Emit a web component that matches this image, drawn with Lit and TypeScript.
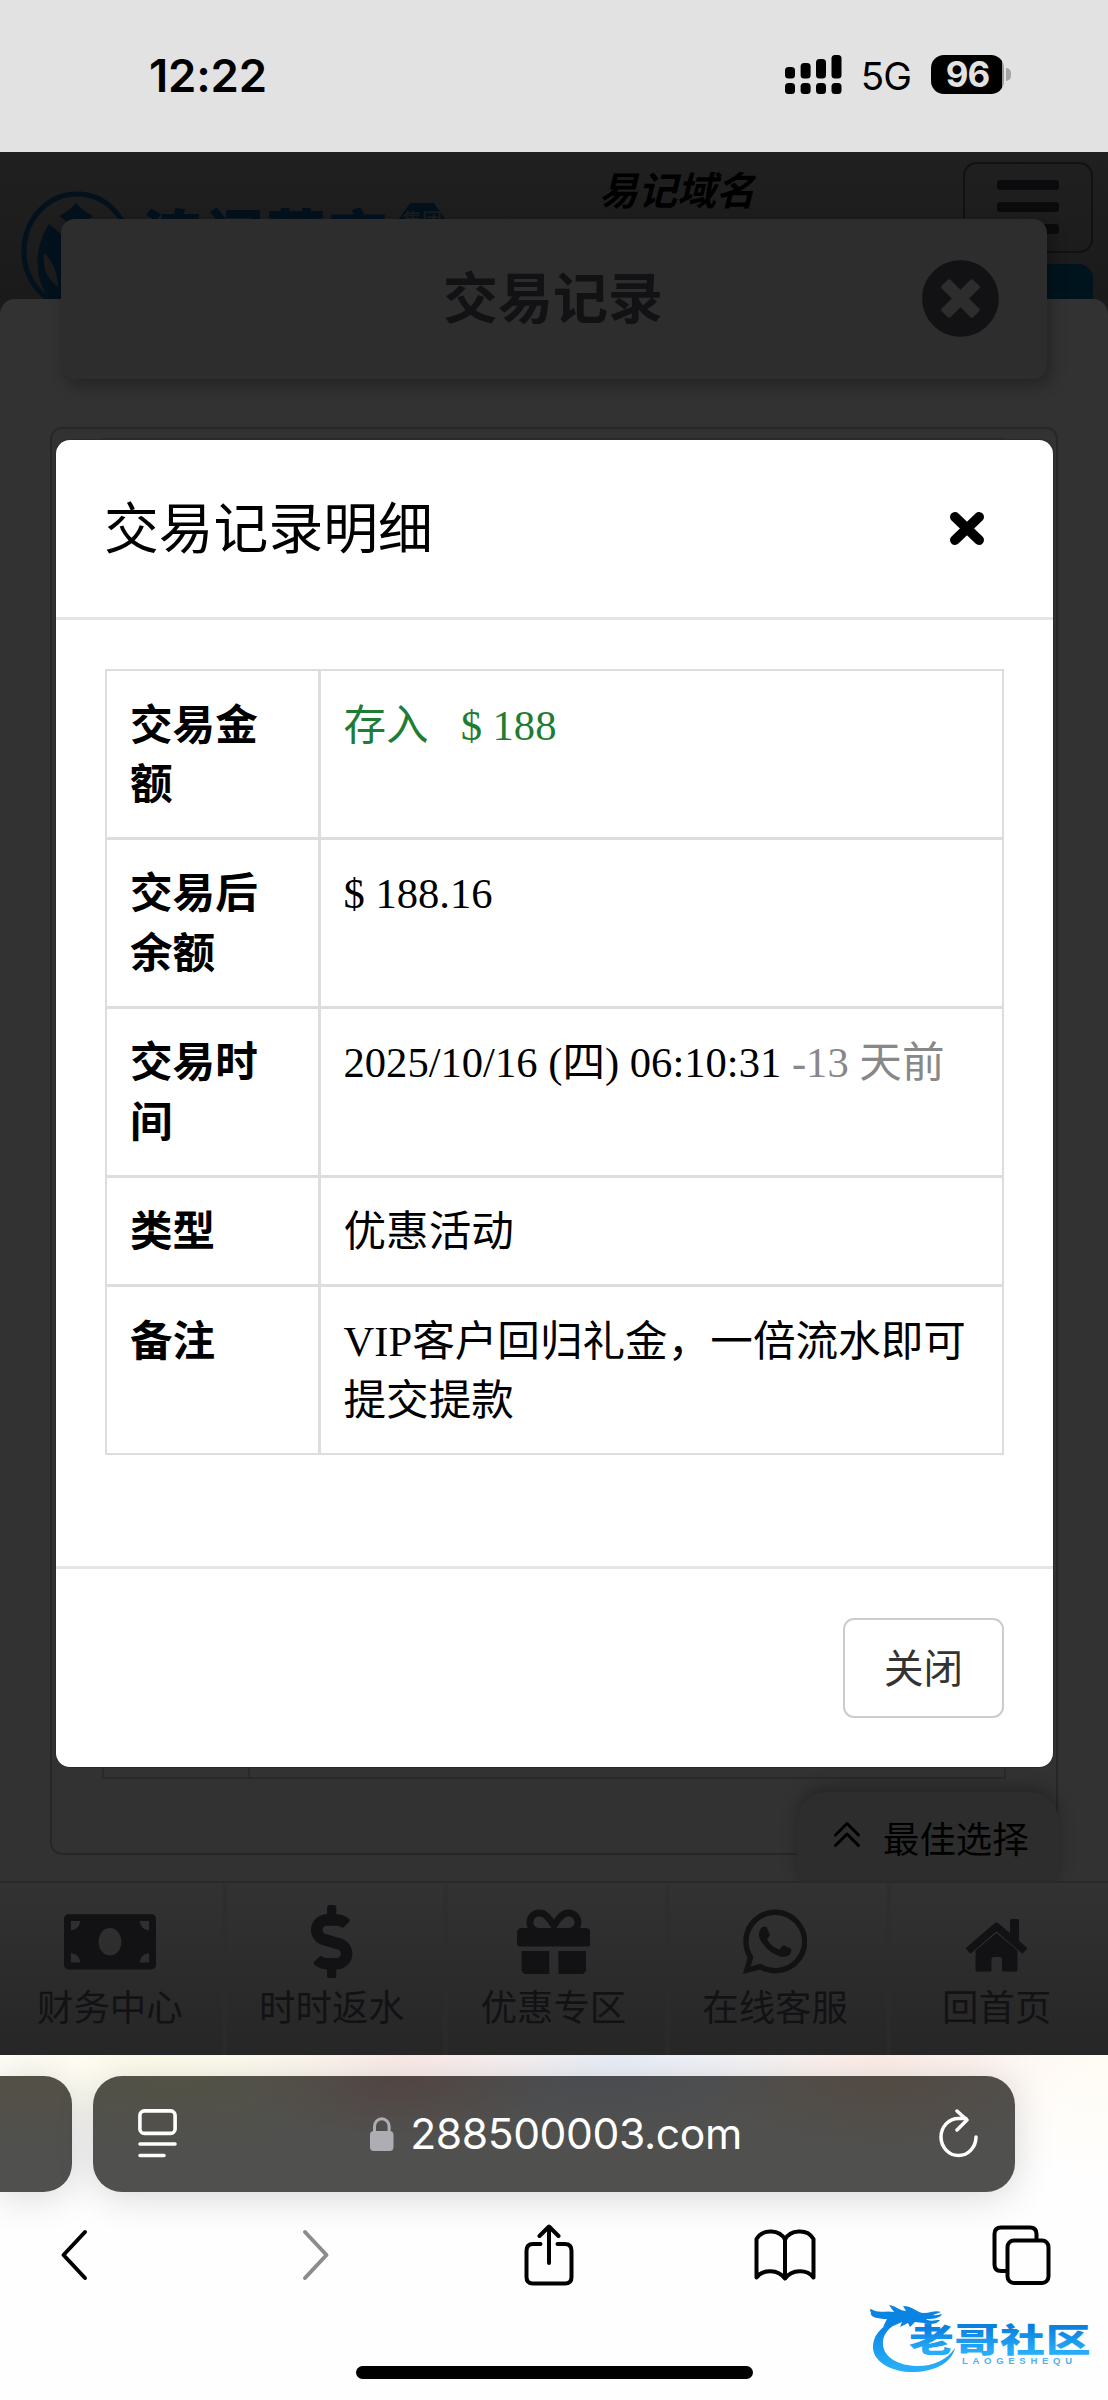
import { LitElement, html, css, svg } from 'lit';
import { customElement } from 'lit/decorators.js';

const money = svg`<path d="M608 64H32C14.33 64 0 78.33 0 96v320c0 17.67 14.33 32 32 32h576c17.67 0 32-14.33 32-32V96c0-17.67-14.33-32-32-32zM48 400v-64c35.35 0 64 28.65 64 64H48zm0-224v-64h64c0 35.35-28.65 64-64 64zm272 176c-44.19 0-80-42.99-80-96 0-53.02 35.82-96 80-96s80 42.98 80 96c0 53.03-35.83 96-80 96zm272 48h-64c0-35.35 28.65-64 64-64v64zm0-224c-35.35 0-64-28.65-64-64h64v64z"/>`;
const dollar = svg`<path d="M209.2 233.4l-108-31.6C88.7 198.2 80 186.5 80 173.5c0-16.3 13.2-29.5 29.5-29.5h66.3c12.2 0 24.2 3.7 34.2 10.5 6.1 4.1 14.3 3.1 19.5-2l34.8-34c7.1-6.9 6.1-18.4-1.8-24.5C238 74.8 207.4 64.1 176 64V16c0-8.8-7.2-16-16-16h-32c-8.8 0-16 7.2-16 16v48h-2.5C45.8 64-5.4 118.7.5 183.6c4.2 46.1 39.4 83.6 83.8 96.6l102.5 30c12.5 3.7 21.2 15.3 21.2 28.3 0 16.3-13.2 29.5-29.5 29.5h-66.3C100 368 88 364.3 78 357.5c-6.1-4.1-14.3-3.1-19.5 2l-34.8 34c-7.1 6.9-6.1 18.4 1.8 24.5 24.5 19.2 55.1 29.9 86.5 30v48c0 8.8 7.2 16 16 16h32c8.8 0 16-7.2 16-16v-48.2c46.6-.9 90.3-28.6 105.7-72.7 21.5-61.6-14.6-124.8-72.5-141.7z"/>`;
const gift = svg`<path d="M32 448c0 17.7 14.3 32 32 32h160V320H32v128zm256 32h160c17.7 0 32-14.3 32-32V320H288v160zm192-320h-42.1c6.2-12.1 10.1-25.5 10.1-40 0-48.5-39.5-88-88-88-41.6 0-68.5 21.3-103 68.3-34.5-47-61.4-68.3-103-68.3-48.5 0-88 39.5-88 88 0 14.5 3.8 27.9 10.1 40H32c-17.7 0-32 14.3-32 32v80c0 8.8 7.2 16 16 16h480c8.8 0 16-7.2 16-16v-80c0-17.7-14.3-32-32-32zm-326.1 0c-22.1 0-40-17.9-40-40s17.9-40 40-40c19.9 0 34.6 3.3 86.1 80h-86.1zm206.1 0h-86.1c51.4-76.5 65.7-80 86.1-80 22.1 0 40 17.9 40 40s-17.9 40-40 40z"/>`;
const whatsapp = svg`<path d="M380.9 97.1C339 55.1 283.2 32 223.9 32c-122.4 0-222 99.6-222 222 0 39.1 10.2 77.3 29.6 111L0 480l117.7-30.9c32.4 17.7 68.9 27 106.1 27h.1c122.3 0 224.1-99.6 224.1-222 0-59.3-25.2-115-67.1-157zm-157 341.6c-33.2 0-65.7-8.9-94-25.7l-6.7-4-69.8 18.3L72 359.2l-4.4-7c-18.5-29.4-28.2-63.3-28.2-98.2 0-101.7 82.8-184.5 184.6-184.5 49.3 0 95.6 19.2 130.4 54.1 34.8 34.9 56.2 81.2 56.1 130.5 0 101.8-84.9 184.6-186.6 184.6zm101.2-138.2c-5.5-2.8-32.8-16.2-37.9-18-5.1-1.9-8.8-2.8-12.5 2.8-3.7 5.6-14.3 18-17.6 21.8-3.2 3.7-6.5 4.2-12 1.4-32.6-16.3-54-29.1-75.5-66-5.7-9.8 5.7-9.1 16.3-30.3 1.8-3.7.9-6.9-.5-9.7-1.4-2.8-12.5-30.1-17.1-41.2-4.5-10.8-9.1-9.3-12.5-9.5-3.2-.2-6.9-.2-10.6-.2-3.7 0-9.7 1.4-14.8 6.9-5.1 5.6-19.4 19-19.4 46.3 0 27.3 19.9 53.7 22.6 57.4 2.8 3.7 39.1 59.7 94.8 83.8 35.2 15.2 49 16.5 66.6 13.9 10.7-1.6 32.8-13.4 37.4-26.4 4.6-13 4.6-24.1 3.2-26.4-1.3-2.5-5-3.9-10.5-6.6z"/>`;
const home = svg`<path d="M3 32 31.500 7.500 60 32" fill="none" stroke="currentColor" stroke-width="7.500" stroke-linejoin="round"/><path d="M45 1.500q0-1.500 1.500-1.500h6q1.500 0 1.500 1.500v21l-9-8z"/><path d="M31.500 14 52.500 31.500v19.500q0 1.500-1.500 1.500H38.500q-1.500 0-1.500-1.500V40.500q0-2.500-2.500-2.500h-5.500q-2.500 0-2.500 2.500V51q0 1.500-1.500 1.500H12q-1.500 0-1.500-1.500V31.500z"/>`;

const navItems = [
	{ label: '财务中心', icon: money, box: '0 0 640 512', w: 92 },
	{ label: '时时返水', icon: dollar, box: '0 0 288 512', w: 41.4 },
	{ label: '优惠专区', icon: gift, box: '0 0 512 512', w: 73.6 },
	{ label: '在线客服', icon: whatsapp, box: '0 0 448 512', w: 64.4 },
	{ label: '回首页', icon: home, box: '0 -14 63 73.6', w: 63 }
];

// status bar
@customElement('status-bar')
class StatusBar extends LitElement {
	static styles = css`
		:host {
			display: flex;
			align-items: center;
			justify-content: space-between;
			box-sizing: border-box;
			height: 152px;
			padding: 0 97px 4px 149px;
			background: #e2e2e2;
			color: #000;
			font-family: Inter, "Liberation Sans", sans-serif;
		}
		.time {
			margin-top: 2px;
			font-size: 45.5px;
			font-weight: 600;
			letter-spacing: -0.2px;
		}
		.right {
			display: flex;
			align-items: center;
		}
		.network {
			margin: 3px 20px 0 19px;
			font-size: 38.5px;
			letter-spacing: -1px;
		}
		.battery {
			display: flex;
			align-items: center;
			justify-content: center;
			width: 73px;
			height: 39px;
			border-radius: 13px;
			background: linear-gradient(90deg, #000 71px, #999 71px);
			color: #e2e2e2;
			font-size: 35px;
			font-weight: 700;
			letter-spacing: -1px;
		}
		.nub {
			width: 5px;
			height: 13px;
			margin-left: 2px;
			border-radius: 0 6px 6px 0;
			background: #a6a6a6;
		}
	`;

	render() {
		return html`
			<span class="time">12:22</span>
			<div class="right">
				<svg width="57" height="39" viewBox="0 0 57 39">
					<rect x="0" y="12" width="10" height="11.500" rx="3.500"/>
					<rect x="15.600" y="8" width="10" height="15.500" rx="3.500"/>
					<rect x="31" y="4" width="10" height="19.500" rx="3.500"/>
					<rect x="46.500" y="0" width="10" height="23.500" rx="3.500"/>
					<rect x="0" y="28" width="10" height="11" rx="3.500"/>
					<rect x="15.600" y="28" width="10" height="11" rx="3.500"/>
					<rect x="31" y="28" width="10" height="11" rx="3.500"/>
					<rect x="46.500" y="28" width="10" height="11" rx="3.500"/>
				</svg>
				<span class="network">5G</span>
				<span class="battery">96</span>
				<span class="nub"></span>
			</div>
		`;
	}
}

// dimmed page behind the dialog
@customElement('site-page')
class SitePage extends LitElement {
	static styles = css`
		:host {
			display: flex;
			flex-direction: column;
			position: relative;
			height: 1903px;
			overflow: hidden;
			background: #1b1b1b;
			font-family: "Noto Sans CJK SC", sans-serif;
		}
		.header {
			display: flex;
			flex: none;
			height: 147px;
			background: linear-gradient(#202020, #1a1a1a);
		}
		.emblem {
			flex: none;
			margin: 39px 0 0 19px;
		}
		.brand {
			display: flex;
			flex: none;
			gap: 5px;
			width: 457px;
			margin: 46px 0 0 5px;
			color: #03111d;
			font-size: 60px;
			font-weight: 900;
			line-height: 72px;
			letter-spacing: 2px;
			white-space: nowrap;
		}
		.hex {
			width: 54px;
			height: 60px;
			margin-top: 5px;
			clip-path: polygon(28% 0, 72% 0, 100% 36%, 100% 100%, 0 100%, 0 36%);
			background: #03111d;
			color: #1c1c1c;
			font-size: 20px;
			font-weight: 500;
			line-height: 34px;
			letter-spacing: 0;
			text-align: center;
		}
		.domain {
			flex: none;
			margin: 7px 0 0;
			color: #000;
			font-size: 39px;
			font-style: italic;
			font-weight: 700;
			line-height: 58px;
			white-space: nowrap;
			width: 364px;
		}
		.side {
			display: flex;
			flex: none;
			flex-direction: column;
			gap: 11px;
		}
		.menu {
			display: flex;
			flex-direction: column;
			align-items: center;
			gap: 12px;
			box-sizing: border-box;
			width: 130px;
			height: 93px;
			margin-top: 9.5px;
			padding-top: 16px;
			border: 2px solid #111;
			border-radius: 14px;
		}
		.menu i {
			width: 62px;
			height: 10px;
			border-radius: 3px;
			background: #0b0b0d;
		}
		.tag {
			height: 36px;
			border-radius: 15px 15px 0 0;
			background: #00141d;
		}
		.sheet {
			flex: 1;
			padding: 128px 50px 25px;
			border-radius: 15px 15px 0 0;
			background: #323232;
		}
		.panel {
			box-sizing: border-box;
			height: 1428px;
			padding: 9px 50px 74px;
			border: 2px solid #272727;
			border-radius: 12px;
		}
		.records {
			display: grid;
			grid-template-columns: 146px 1fr;
			box-sizing: border-box;
			height: 100%;
			border: 2px solid #292929;
		}
		.records i {
			border-right: 2px solid #292929;
		}
		.title {
			display: flex;
			align-items: center;
			justify-content: center;
			position: absolute;
			top: 67px;
			left: 61px;
			width: 986px;
			height: 159.5px;
			border-radius: 14px;
			background: #2d2d2d;
			box-shadow: 4px 6px 16px rgba(0, 0, 0, 0.3);
			color: #121214;
			font-size: 55px;
			font-weight: 700;
		}
		.title svg {
			position: absolute;
			right: 47px;
			fill: #121214;
		}
		.title span {
			margin: -10px 2px 0 0;
		}
		.best {
			display: flex;
			align-items: center;
			gap: 22px;
			position: absolute;
			top: 1640px;
			left: 797px;
			box-sizing: border-box;
			width: 262px;
			height: 90px;
			padding-left: 36px;
			border-radius: 30px 30px 0 0;
			background: #2d2d2d;
			box-shadow: 0 -6px 16px rgba(0, 0, 0, 0.25);
			color: #000;
			font-size: 36.4px;
		}
		.best svg {
			margin-top: -4px;
		}
		.nav {
			display: grid;
			grid-template-columns: repeat(5, 1fr);
			position: absolute;
			bottom: 0;
			left: 0;
			width: 100%;
			box-sizing: border-box;
			height: 174px;
			border-top: 2px solid #292929;
			background: linear-gradient(#323232, #262626);
		}
		.item {
			display: flex;
			flex-direction: column;
			align-items: center;
			box-sizing: border-box;
			padding-top: 21.5px;
			padding-right: 6px;
			border-left: 5.5px solid #2b2b2b;
			border-image: linear-gradient(#2f2f2f, #292929) 1;
			color: #121214;
			font-size: 36.4px;
			line-height: 50px;
		}
		.item:first-child {
			border-left: 0;
			padding-right: 2px;
		}
		.item svg {
			margin-bottom: 2px;
			fill: currentColor;
		}
	`;

	render() {
		return html`
			<div class="header">
				<svg class="emblem" width="118" height="124" viewBox="0 0 118 124" fill="#03111d">
					<ellipse cx="58" cy="60" rx="53" ry="57" fill="none" stroke="#03111d" stroke-width="5"/>
					<path d="M57 12q7 8 17 13-10 6-12 17h-9q-2-11-13-17 10-5 17-13z"/>
					<path d="M30 33c-14 22-15 48-4 68 8 13 20 16 32 17V66C51 50 41 42 30 33z"/>
					<path d="M25 62c-2 15 4 27 14 34 0-14-5-26-14-34z" fill="#1c1c1c"/>
				</svg>
				<div class="brand">澳门葡京<span class="hex">集团</span></div>
				<div class="domain">易记域名</div>
				<div class="side">
					<div class="menu"><i></i><i></i><i></i></div>
					<div class="tag"></div>
				</div>
			</div>
			<div class="sheet">
				<div class="panel"><div class="records"><i></i></div></div>
			</div>
			<div class="title">
				<span>交易记录</span>
				<svg width="79" height="79" viewBox="0 0 512 512"><path d="M256 8C119 8 8 119 8 256s111 248 248 248 248-111 248-248S393 8 256 8zm121.6 313.1c4.7 4.7 4.7 12.3 0 17L338 377.6c-4.7 4.7-12.3 4.7-17 0L256 312l-65.1 65.6c-4.7 4.7-12.3 4.7-17 0L134.4 338c-4.7-4.7-4.7-12.3 0-17l65.6-65-65.6-65.1c-4.7-4.7-4.7-12.3 0-17l39.600-39.600c4.7-4.7 12.3-4.7 17 0l65 65.7 65.1-65.6c4.7-4.7 12.3-4.7 17 0l39.6 39.6c4.7 4.7 4.7 12.3 0 17L312 256l65.6 65.1z"/></svg>
			</div>
			<div class="best">
				<svg width="28" height="28" viewBox="0 0 28 28" fill="none" stroke="#000" stroke-width="3" stroke-linecap="round" stroke-linejoin="round">
					<path d="M2.500 14 14 2.500 25.500 14M2.500 24.500 14 13 25.500 24.500"/>
				</svg>
				<span>最佳选择</span>
			</div>
			<div class="nav">
				${navItems.map(item => html`
					<div class="item">
						<svg width=${item.w} height="73.6" viewBox=${item.box}>${item.icon}</svg>
						<span>${item.label}</span>
					</div>
				`)}
			</div>
		`;
	}
}

// transaction detail dialog
@customElement('record-dialog')
class RecordDialog extends LitElement {
	static styles = css`
		:host {
			display: block;
			border-radius: 14px;
			background: #fff;
			box-shadow: 0 0 0 1px #2a2a2a;
			color: #000;
			font-family: "Liberation Serif", "Noto Sans CJK SC", serif;
		}
		.head {
			display: flex;
			align-items: center;
			justify-content: space-between;
			box-sizing: border-box;
			height: 180px;
			padding: 0 68px 0 48px;
			border-bottom: 3px solid #e5e5e5;
			font-family: "Noto Sans CJK SC", sans-serif;
			font-size: 54.8px;
		}
		.head span {
			margin-top: -9px;
		}
		.body {
			box-sizing: border-box;
			height: 946.5px;
			padding: 49px 49px 0;
		}
		.table {
			border: 2px solid #ddd;
		}
		.row {
			display: grid;
			grid-template-columns: 213.500px 1fr;
			font-size: 42.6px;
			line-height: 59.4px;
		}
		.row + .row {
			border-top: 3px solid #ddd;
		}
		.row div {
			box-sizing: border-box;
			padding: 24.2px 20px 22.9px 23px;
		}
		.row:first-child div {
			padding-top: 25px;
		}
		.row .name {
			padding-right: 40px;
			border-right: 3px solid #ddd;
			font-weight: 700;
		}
		.in {
			color: #1f7d33;
			white-space: pre;
		}
		.ago {
			color: #888;
		}
		.foot {
			display: flex;
			justify-content: flex-end;
			align-items: flex-start;
			box-sizing: border-box;
			height: 201px;
			padding: 49px 49px 0;
			border-top: 3px solid #e5e5e5;
		}
		button {
			width: 161px;
			height: 100px;
			padding: 0 0 5px;
			border: 2.5px solid #ccc;
			border-radius: 11px;
			background: #fff;
			color: #333;
			font-family: "Noto Sans CJK SC", sans-serif;
			font-size: 39.500px;
		}
	`;

	render() {
		return html`
			<div class="head">
				<span>交易记录明细</span>
				<svg width="36" height="35" viewBox="0 0 36 35"><path d="M6 6 30 29M30 6 6 29" stroke="#000" stroke-width="10" stroke-linecap="round"/></svg>
			</div>
			<div class="body">
				<div class="table">
					<div class="row"><div class="name">交易金额</div><div><span class="in">存入   $ 188</span></div></div>
					<div class="row"><div class="name">交易后余额</div><div>$ 188.16</div></div>
					<div class="row"><div class="name">交易时间</div><div>2025/10/16 (四) 06:10:31 <span class="ago">-13 天前</span></div></div>
					<div class="row"><div class="name">类型</div><div>优惠活动</div></div>
					<div class="row"><div class="name">备注</div><div>VIP客户回归礼金，一倍流水即可提交提款</div></div>
				</div>
			</div>
			<div class="foot"><button>关闭</button></div>
		`;
	}
}

// browser address bar and toolbar
@customElement('browser-bar')
class BrowserBar extends LitElement {
	static styles = css`
		:host {
			display: block;
			position: relative;
			height: 345px;
			overflow: hidden;
			background:
				radial-gradient(ellipse 260px 90px at 160px 0, #fffceb, transparent),
				radial-gradient(ellipse 200px 80px at 400px 0, #fbeae8, transparent),
				radial-gradient(ellipse 220px 90px at 615px 0, #e9eef7, transparent),
				radial-gradient(ellipse 220px 80px at 880px 0, #fdeee8, transparent),
				radial-gradient(ellipse 180px 130px at 1108px 0, #fffbf4, transparent),
				#fefefe;
		}
		.tabs {
			display: flex;
			gap: 21px;
			padding-top: 20.5px;
		}
		.prev,
		.url {
			box-sizing: border-box;
			height: 116px;
			box-shadow: 0 4px 38px rgba(0, 0, 0, 0.16);
		}
		.prev {
			width: 72px;
			border-radius: 0 28px 28px 0;
			background: linear-gradient(#545046, #50504e 60%);
		}
		.url {
			display: flex;
			align-items: center;
			width: 922px;
			padding: 0 37px 0 45px;
			border-radius: 29px;
			background:
				radial-gradient(ellipse 200px 70px at 80px 0, rgba(84, 82, 68, 0.9), rgba(80, 79, 72, 0)),
				radial-gradient(ellipse 160px 60px at 305px 0, rgba(82, 67, 64, 0.9), rgba(80, 74, 72, 0)),
				radial-gradient(ellipse 200px 60px at 510px 0, rgba(72, 75, 81, 0.9), rgba(76, 77, 80, 0)),
				radial-gradient(ellipse 180px 70px at 790px 0, rgba(83, 73, 65, 0.9), rgba(80, 76, 72, 0)),
				#50504e;
			color: #fff;
			font-family: Inter, "Liberation Sans", sans-serif;
			font-size: 42.6px;
			letter-spacing: -0.4px;
		}
		.address {
			display: flex;
			align-items: center;
			justify-content: center;
			gap: 16px;
			flex: 1;
			padding-right: 4px;
		}
		.tools {
			display: grid;
			grid-template-columns: repeat(5, 236px);
			justify-items: center;
			margin-left: -41px;
			padding-top: 32px;
			fill: none;
			stroke: #000;
			stroke-width: 4;
			stroke-linecap: round;
			stroke-linejoin: round;
		}
		.back {
			margin-right: 6px;
		}
		.forward {
			margin-left: 6px;
			stroke: #8c8c8c;
		}
		.grab {
			width: 397px;
			height: 13px;
			margin: 80px auto 0;
			border-radius: 7px;
			background: #000;
		}
		.mark {
			position: absolute;
			left: 867px;
			top: 243px;
		}
		.mark text {
			font-family: "Noto Sans CJK SC", sans-serif;
			font-weight: 900;
		}
		.mark .sub {
			font-family: "Liberation Sans", sans-serif;
			font-weight: 700;
		}
	`;

	render() {
		return html`
			<div class="tabs">
				<div class="prev"></div>
				<div class="url">
					<svg width="39" height="49" viewBox="0 0 39 49" fill="none" stroke="#fff" stroke-width="3.600" stroke-linecap="round">
						<rect x="1.900" y="1.900" width="35.200" height="22.500" rx="4.500"/>
						<path d="M2 35h35M2 46.500h24"/>
					</svg>
					<div class="address">
						<svg width="24" height="34" viewBox="0 0 24 34" fill="#aeadb4">
							<rect x="0" y="14" width="23.500" height="20" rx="4"/>
							<path d="M4.500 16V9.500a7.300 7.800 0 0 1 14.600 0V16" fill="none" stroke="#aeadb4" stroke-width="3"/>
						</svg>
						<span>288500003.com</span>
					</div>
					<svg width="39" height="49" viewBox="0 0 39 49" fill="none" stroke="#fff" stroke-width="3.500" stroke-linecap="round" stroke-linejoin="round">
						<path d="M37 28a17.500 18.500 0 1 1-17.500-18.500h7.500M18 2l10 9-10 10"/>
					</svg>
				</div>
			</div>
			<div class="tools">
				<svg class="back" width="28" height="62" viewBox="0 0 28 62"><path d="M25 8 3.500 31 25 54"/></svg>
				<svg class="forward" width="28" height="62" viewBox="0 0 28 62"><path d="M3 8 24.500 31 3 54"/></svg>
				<svg width="50" height="62" viewBox="0 0 50 62">
					<path d="M16.500 20H9q-6.500 0-6.500 7v26q0 6.500 6.500 6.500h32q6.500 0 6.500-6.500V27q0-7-6.500-7h-7.500M25 39V3M15.500 12 25 2.500 34.500 12"/>
				</svg>
				<svg width="62" height="62" viewBox="0 0 62 62">
					<path d="M31 15.500C26 6 9 4 2.500 15v38.500C9 45 24 45 31 54.500c7-9.500 22-9.500 28.500-1V15C53 4 36 6 31 15.500zV54"/>
				</svg>
				<svg width="59" height="62" viewBox="0 0 59 62">
					<path d="M15 47H9q-6.500 0-6.500-6.500V10q0-6.500 6.500-6.500h29q6.500 0 6.500 6.500v6"/>
					<rect x="15.500" y="16.500" width="41" height="42.500" rx="6.500"/>
				</svg>
			</div>
			<div class="grab"></div>
			<svg class="mark" width="236" height="90" viewBox="0 0 236 90">
				<defs>
					<linearGradient id="blue" gradientUnits="userSpaceOnUse" x1="0" y1="15" x2="0" y2="78">
						<stop offset="0.2" stop-color="#0a84e2"/>
						<stop offset="0.85" stop-color="#27adf8"/>
					</linearGradient>
					<linearGradient id="word" x1="0" y1="0" x2="0" y2="1">
						<stop offset="0.3" stop-color="#0a80e0"/>
						<stop offset="0.8" stop-color="#27adf8"/>
					</linearGradient>
				</defs>
				<g fill="url(#blue)">
					<path d="M30 21C13 28 5 39 6 51c2 15 22 24 43 23 20-1 36-10 39-24-8 12-22 18-37 18-20 0-34-9-35-21-1-9 5-18 17-23z"/>
					<path d="M4 11c8 5 15 1 23 3l-5-7c7 1 11 6 17 6l-3-5c10 0 14 7 21 7 7 0 11-3 17-1l-8 3c4 1 7-1 9-1-2 5-12 5-16 5 3 3 9 1 14 1-3 5-11 4-16 3l-9-1-5 5-2-4-8 4 2-5-9 4 2-5-12 6 4-8c-9 0-18-2-16-7-1-1-2-2 0-3z"/>
				</g>
				<text transform="translate(42 54) scale(1.340 1)" font-size="33.500" letter-spacing="0.500" fill="url(#word)">老哥社区</text>
				<text class="sub" x="95" y="66" font-size="9.500" textLength="110" fill="#4fb2f5">LAOGESHEQU</text>
			</svg>
		`;
	}
}

@customElement('app-root')
class AppRoot extends LitElement {
	static styles = css`
		:host {
			display: block;
			position: relative;
			width: 1108px;
			height: 2400px;
			overflow: hidden;
			background: #fff;
		}
		.dialog {
			position: absolute;
			top: 439.5px;
			left: 56px;
			width: 997px;
		}
	`;

	render() {
		return html`
			<status-bar></status-bar>
			<site-page></site-page>
			<browser-bar></browser-bar>
			<record-dialog class="dialog"></record-dialog>
		`;
	}
}
